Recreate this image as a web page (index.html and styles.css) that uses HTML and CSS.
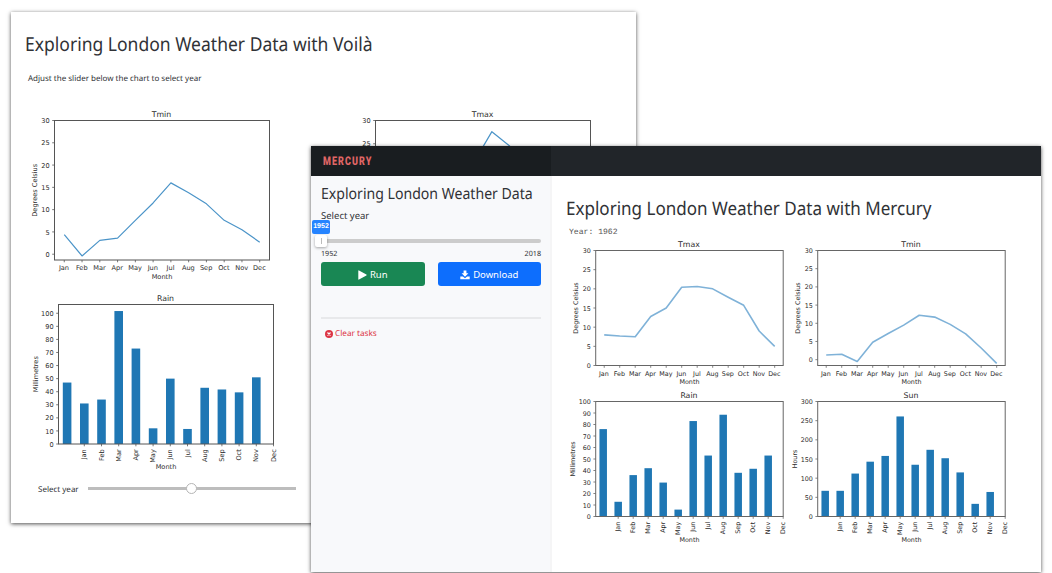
FILE: index.html
```html
<!DOCTYPE html>
<html lang="en">
<head>
<meta charset="utf-8">
<title>Exploring London Weather Data</title>
<link rel="stylesheet" href="styles.css">
</head>
<body>
<main class="desk">
  <section class="window voila">
    <h1 class="title voila-title"><span>Exploring London Weather Data with Voilà</span></h1>
    <p class="hint">Adjust the slider below the chart to select year</p>
    <div class="voila-charts">
      <svg class="chart" data-chart="voilaTmin"></svg>
      <svg class="chart" data-chart="voilaTmax"></svg>
      <svg class="chart" data-chart="voilaRain"></svg>
    </div>
    <div class="voila-slider">
      <span class="voila-label">Select year</span>
      <div class="voila-track"><i class="voila-knob"></i></div>
    </div>
  </section>

  <section class="window mercury">
    <header class="topbar">
      <div class="brand"><span class="logo">MERCURY</span></div>
    </header>
    <div class="body">
      <aside class="sidebar">
        <h2 class="side-title"><span>Exploring London Weather Data</span></h2>
        <div class="side-label">Select year</div>
        <div class="range">
          <div class="range-track"></div>
          <div class="range-knob"></div>
          <div class="range-value">1952</div>
        </div>
        <div class="range-ends"><span>1952</span><span>2018</span></div>
        <div class="buttons">
          <button class="btn run"><svg width="9" height="10" viewBox="0 0 9 10"><path d="M.3.7Q.3 0 1 .4L8.400 4.500Q9 5 8.400 5.500L1 9.600Q.3 10 .3 9.300Z" fill="#fff"/></svg><span>Run</span></button>
          <button class="btn download"><svg width="10" height="10" viewBox="0 0 10 10"><path d="M3.600.5h2.800v2.800h2L5 6.800 1.600 3.300h2zM.3 6.400h2.600L5 8.200l2.100-1.800h2.600v2.900H.3z" fill="#fff"/></svg><span>Download</span></button>
        </div>
        <div class="rule"></div>
        <div class="clear"><svg width="8" height="8" viewBox="0 0 8 8"><circle cx="4" cy="4" r="4" fill="#dc3545"/><path d="M2.500 2.500l3 3M5.500 2.500l-3 3" stroke="#fff" stroke-width="1.200"/></svg><span>Clear tasks</span></div>
      </aside>
      <article class="notebook">
        <h1 class="title mercury-title"><span>Exploring London Weather Data with Mercury</span></h1>
        <pre class="output">Year: 1962</pre>
        <div class="mercury-charts">
          <svg class="chart" data-chart="mercuryTmax"></svg>
          <svg class="chart" data-chart="mercuryTmin"></svg>
          <svg class="chart" data-chart="mercuryRain"></svg>
          <svg class="chart" data-chart="mercurySun"></svg>
        </div>
      </article>
    </div>
  </section>
</main>
<script src="charts.js"></script>
</body>
</html>
```
FILE: styles.css
```css
* { box-sizing: border-box; }
body { margin: 0; background: #fff; font-family: "Noto Sans", "Open Sans", sans-serif; color: #303236; text-rendering: geometricPrecision; }
h1, h2, p, pre { margin: 0; font-weight: 400; }
.desk { position: relative; width: 1052px; height: 573px; overflow: hidden; }
.window { position: absolute; background: #fff; }
.title { line-height: 26px; white-space: nowrap; }
.title span, .side-title span { display: inline-block; transform-origin: left; }
.chart { display: block; overflow: visible; }
.chart text { font-family: "DejaVu Sans", sans-serif; fill: #2c2c2c; }

.voila { left: 11px; top: 12px; width: 625px; height: 511px; box-shadow: 0 1px 4px rgba(0,0,0,.7); padding: 19px 0 0 11px; }
.voila-title { padding-left: 3px; font-size: 19.2px; }
.voila-title span { transform: scaleX(.913); }
.hint { padding: 15px 0 0 6px; font-size: 8px; line-height: 14px; height: 51px; }
.voila-charts { display: grid; grid-template-columns: 321px 260px; grid-template-rows: 184px 184px; }
.voila-slider { display: flex; align-items: center; gap: 9px; padding-left: 16px; height: 12px; margin-top: 8px; }
.voila-label { font-size: 8px; line-height: 12px; width: 41px; white-space: nowrap; }
.voila-track { width: 208px; height: 3px; background: #bdbdbd; display: flex; align-items: center; margin-top: -3px; }
.voila-knob { width: 11px; height: 11px; border-radius: 50%; background: #fff; border: 1px solid #b5b5b5; margin-left: 98px; flex: none; }

.mercury { left: 311px; top: 146px; width: 730px; height: 426px; box-shadow: 0 1px 4px rgba(0,0,0,.7); display: flex; flex-direction: column; }
.topbar { height: 30px; flex: none; background: #212529; display: flex; }
.brand { width: 240px; background: #191d20; display: flex; align-items: center; padding: 0 0 0 11.5px; }
.logo { font-family: Roboto, sans-serif; font-weight: 900; font-size: 12px; line-height: 12px; letter-spacing: 1.4px; color: #e06666; transform: scaleX(.75); transform-origin: left; }
.body { display: flex; flex: 1; }
.sidebar { width: 241px; background: #f8f9fb; border-right: 2px solid #f5f5f6; padding: 7px 9px 0 10px; display: flex; flex-direction: column; }
.side-title { font-size: 15.4px; line-height: 22px; white-space: nowrap; height: 22px; }
.side-title span { transform: scaleX(.915); }
.side-label { font-size: 9.5px; line-height: 14px; padding-top: 4px; }
.range { position: relative; height: 24px; margin-top: 4px; }
.range-track { position: absolute; left: 0; right: 0; top: 12px; height: 4px; border-radius: 2px; background: #ccc; }
.range-knob { position: absolute; left: -6px; top: 8px; width: 12px; height: 12px; border-radius: 2px; background: #fff; box-shadow: 0 1px 3px rgba(0,0,0,.35); }
.range-knob::after { content: ""; position: absolute; left: 5.500px; top: 3px; width: 1px; height: 6px; background: #bbb; }
.range-value { position: absolute; left: -9px; top: -7px; width: 18px; height: 14px; border-radius: 2px; background: #2684ff; color: #fff; font: 700 7px/14px "Liberation Sans", sans-serif; text-align: center; }
.range-ends { display: flex; justify-content: space-between; font-size: 7.2px; line-height: 10px; height: 11px; margin-top: -2px; }
.buttons { display: grid; grid-template-columns: 103.5px 103.5px; column-gap: 13px; margin-top: 2px; }
.btn { height: 24px; border: 0; border-radius: 3px; color: #fff; display: flex; align-items: center; justify-content: center; gap: 3px; padding: 1px 0 0; font: 9.5px/20px "Noto Sans", sans-serif; }
.run { background: #198754; }
.download { background: #0d6efd; }
.rule { height: 2px; background: #e8e9eb; margin: 31px 0 9px; }
.clear { display: flex; align-items: center; gap: 2px; padding-left: 4px; font-size: 8.2px; line-height: 12px; color: #dc3545; }
.notebook { flex: 1; padding: 20px 0 0 12px; }
.mercury-title { padding-left: 2px; font-size: 18.7px; }
.mercury-title span { transform: scaleX(.911); }
.output { font: 8.1px/12px "Liberation Mono", monospace; color: #555; padding: 5px 0 0 5px; height: 16px; }
.mercury-charts { display: grid; grid-template-columns: 222px 222px; grid-template-rows: 151px 151px; margin-left: -1px; }
```
FILE: charts.js
```js
const MONTHS = ["Jan","Feb","Mar","Apr","May","Jun","Jul","Aug","Sep","Oct","Nov","Dec"];
const LEFT = 32.5, TOP = 12.5;
const back = { w: 215, h: 139.5, font: 6.6, line: "#4b94c8", stroke: 1.2, frame: "#555" };
const front = { w: 187.5, h: 115, font: 6.4, line: "#7fb2d8", stroke: 1.6, frame: "#666", dx: .2 };
const steps = (a, b, s) => { const r = []; for (let v = a; v <= b; v += s) r.push(v); return r; };

const CHARTS = {
  voilaTmin: { ...back, title: "Tmin", label: "Degrees Celsius", ticks: steps(0, 30, 5), min: -1.3, max: 30,
    data: [4.4,-.4,3.1,3.6,7.6,11.5,16,13.8,11.3,7.6,5.5,2.7] },
  voilaTmax: { ...back, title: "Tmax", label: "Degrees Celsius", ticks: steps(5, 30, 5), min: 0, max: 30,
    data: [7.2,6.5,9.8,12,17,21.1,27.6,24.5,19.5,15,10.6,7.4] },
  voilaRain: { ...back, bar: true, dx: 4, title: "Rain", label: "Millimetres", ticks: steps(0, 100, 10), min: 0, max: 106.7,
    data: [47,31,34,101.7,73,12,50,11.5,43,41.7,39.5,51] },
  mercuryTmax: { ...front, title: "Tmax", label: "Degrees Celsius", ticks: steps(0, 30, 5), min: 0, max: 30,
    data: [8,7.7,7.5,12.8,15,20.4,20.6,20,17.8,15.7,9,5] },
  mercuryTmin: { ...front, title: "Tmin", label: "Degrees Celsius", ticks: steps(0, 30, 5), min: -1.6, max: 30,
    data: [1.3,1.5,-.5,4.8,7.2,9.5,12.2,11.7,9.7,7.1,3.2,-1] },
  mercuryRain: { ...front, bar: true, title: "Rain", label: "Millimetres", ticks: steps(0, 100, 10), min: 0, max: 100,
    data: [76,12.8,36,42,29.5,6,83,53,88.5,38,41.5,53] },
  mercurySun: { ...front, bar: true, title: "Sun", label: "Hours", ticks: steps(0, 300, 50), min: 0, max: 300,
    data: [67,67,112,143,158,261,135,174,152,115,33,64] }
};

function draw(svg, c) {
  const x0 = LEFT + (c.dx || 0), bottom = TOP + c.h;
  const py = v => bottom - (v - c.min) / (c.max - c.min) * c.h;
  const step = c.bar ? c.w / 12.5 : c.w / 12.1;
  const px = i => x0 + step * (c.bar ? .5 : .55) + i * step;
  const text = (s, x, y, anchor, size = c.font, extra = "") =>
    `<text x="${x}" y="${y}" text-anchor="${anchor}" font-size="${size}" ${extra}>${s}</text>`;
  const mid = x0 + c.w / 2;
  let out = "";
  if (c.bar) {
    c.data.forEach((v, i) => {
      out += `<rect x="${px(i) - step / 4}" y="${py(v)}" width="${step / 2}" height="${bottom - py(v)}" fill="#1f77b4"/>`;
    });
  } else {
    const pts = c.data.map((v, i) => `${px(i)},${py(v)}`).join(" ");
    out += `<polyline points="${pts}" fill="none" stroke="${c.line}" stroke-width="${c.stroke}" stroke-linejoin="round"/>`;
  }
  out += `<rect x="${x0}" y="${TOP}" width="${c.w}" height="${c.h}" fill="none" stroke="${c.frame}" stroke-width="1"/>`;
  c.ticks.forEach(v => {
    out += `<path d="M${x0 - 2.3} ${py(v)}H${x0}" stroke="${c.frame}" stroke-width=".8"/>`;
    out += text(v, x0 - 4.8, py(v) + 2.6, "end");
  });
  MONTHS.forEach((m, i) => {
    const x = px(c.bar ? i + 1 : i);
    out += `<path d="M${x} ${bottom}v2.300" stroke="${c.frame}" stroke-width=".8"/>`;
    out += c.bar
      ? text(m, 0, 0, "end", c.font, `transform="translate(${x + 2.1} ${bottom + 5.2}) rotate(-90)"`)
      : text(m, x - .3, bottom + 10, "middle");
  });
  out += text("Month", mid, bottom + (c.bar ? 25.2 : 18.9), "middle");
  out += text(c.title, mid - .5, TOP - 3.6, "middle", 7.8);
  const lx = x0 - (c.bar ? 20.5 : 17.9);
  out += text(c.label, 0, 0, "middle", c.font, `transform="translate(${lx} ${TOP + c.h / 2}) rotate(-90)"`);
  svg.setAttribute("width", c.w + 46);
  svg.setAttribute("height", c.h + (c.bar ? 42 : 34));
  svg.innerHTML = out;
}

document.querySelectorAll(".chart").forEach(s => draw(s, CHARTS[s.dataset.chart]));
```
